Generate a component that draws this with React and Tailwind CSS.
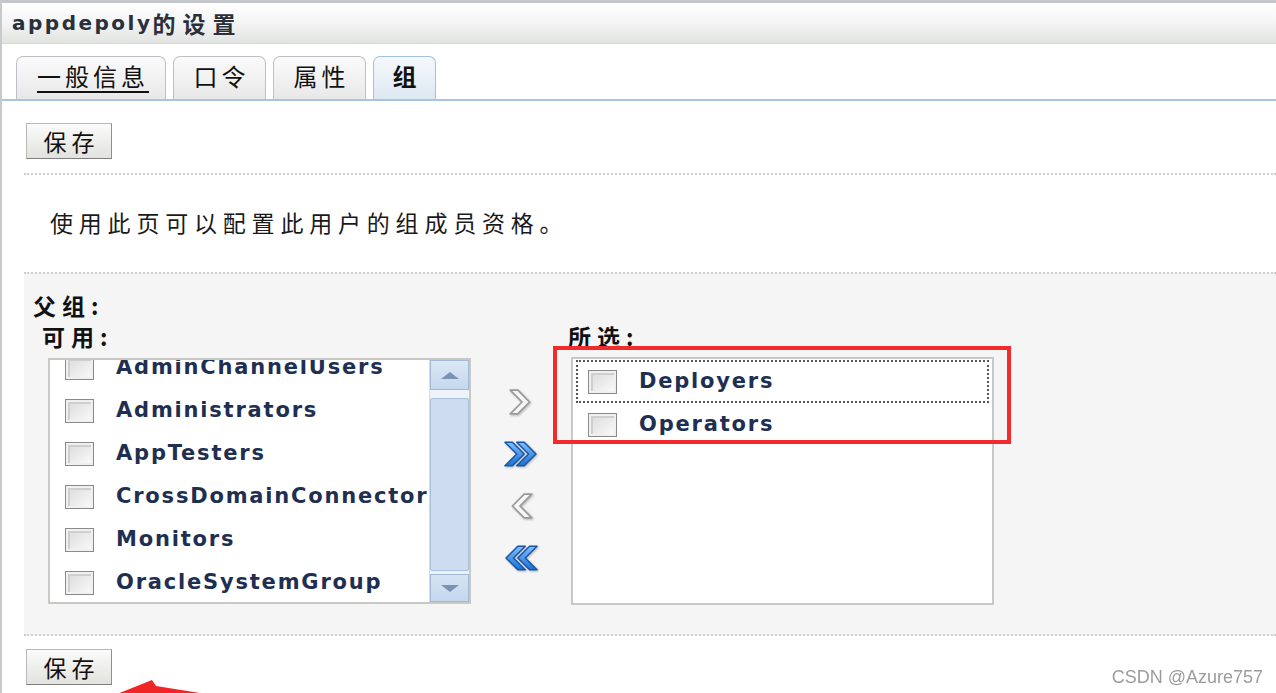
import React from "react";

const CJK = "font-['Noto_Sans_CJK_SC',sans-serif]";
const LAT = "font-['DejaVu_Sans','Noto_Sans_CJK_SC',sans-serif]";

function Checkbox() {
  return (
    <span className="inline-block w-[29px] h-[24px] shrink-0 border border-[#8a8a8a] bg-gradient-to-br from-[#d9d9d9] to-[#fbfbfb] shadow-[inset_0_0_0_2px_#f0f0f0,inset_1px_1px_0_3px_#cfcfcf]" />
  );
}

function SaveButton() {
  return (
    <button className={`w-[86px] h-[36px] border border-[#b8b8b8] border-r-[#8f8f8f] border-b-[#7f7f7f] bg-gradient-to-b from-[#fbfbfb] to-[#e2e2de] flex items-center justify-center text-[23px] tracking-[5px] pl-[5px] leading-none text-[#111] ${CJK}`}>
      保存
    </button>
  );
}

function Tab({ label, width, active, underline }) {
  return (
    <div
      className={`h-[43px] rounded-t-[7px] border border-b-0 flex items-center justify-center pb-[5px] ${CJK} text-[24px] tracking-[4px] pl-[4px] text-[#111] ${
        active
          ? "border-[#a4c0dd] bg-gradient-to-b from-[#f6f9fc] to-[#dde8f3] font-bold"
          : "border-[#bcc0c4] bg-gradient-to-b from-[#fbfbfb] to-[#e8e8e8]"
      }`}
      style={{ width }}
    >
      <span className={underline ? "underline underline-offset-[5px] decoration-[2px]" : ""}>{label}</span>
    </div>
  );
}

function Item({ name, focused }) {
  return (
    <div
      className={`h-[43px] flex items-center shrink-0 ${
        focused ? "border-2 border-dotted border-[#555] mx-[3px] pl-[10px] h-[41px]" : "pl-[15px]"
      }`}
    >
      <Checkbox />
      <span className={`ml-[22px] text-[21px] font-bold tracking-[1.8px] text-[#1e2f52] whitespace-nowrap ${LAT}`}>{name}</span>
    </div>
  );
}

function Chevron({ dir, double }) {
  const single = "3,3 10,3 21,14 10,25 3,25 14,14";
  const second = "14,3 21,3 32,14 21,25 14,25 25,14";
  const flip = dir === "left" ? "scale(-1,1) translate(-36,0)" : "";
  return (
    <svg width="40" height="30" viewBox="0 0 36 28" className="drop-shadow-[1px_1px_1px_rgba(0,0,0,0.25)]">
      <defs>
        <linearGradient id="bg1" x1="0" y1="0" x2="0" y2="1">
          <stop offset="0" stopColor="#7fc0ff" />
          <stop offset="1" stopColor="#1e6fd0" />
        </linearGradient>
      </defs>
      <g transform={flip}>
        {double ? (
          <>
            <polygon points={single} fill="url(#bg1)" stroke="#1757a8" strokeWidth="1.4" strokeLinejoin="round" />
            <polygon points={second} fill="url(#bg1)" stroke="#1757a8" strokeWidth="1.4" strokeLinejoin="round" />
          </>
        ) : (
          <polygon
            points="8,3 15,3 26,14 15,25 8,25 19,14"
            fill="#f6f6f6"
            stroke="#9a9a9a"
            strokeWidth="1.6"
            strokeLinejoin="round"
          />
        )}
      </g>
    </svg>
  );
}

export default function App() {
  const available = [
    "AdminChannelUsers",
    "Administrators",
    "AppTesters",
    "CrossDomainConnector",
    "Monitors",
    "OracleSystemGroup",
  ];
  return (
    <div className="relative w-[1276px] h-[693px] overflow-hidden bg-white border-l-2 border-[#c6cacd]">
      {/* top strip */}
      <div className="h-[3px] bg-[#c3c7cb]" />
      {/* title bar */}
      <div className="h-[41px] border-b border-[#d6d8d6] bg-gradient-to-b from-white via-[#f3f4f3] to-[#e2e4e1] flex items-center pl-[10px] text-[#2a2f3c]">
        <span className={`text-[20px] font-bold tracking-[2.5px] ${LAT}`}>appdepoly</span>
        <span className={`text-[23px] font-bold tracking-[7px] ${CJK}`}>的设置</span>
      </div>

      {/* tabs */}
      <div className="mt-[12px] flex items-end gap-[7px] pl-[14px] border-b-2 border-[#a9c4df]">
        <Tab label="一般信息" width={150} underline />
        <Tab label="口令" width={93} />
        <Tab label="属性" width={93} />
        <Tab label="组" width={63} active />
      </div>

      <div className="pl-[22px]">
        <div className="mt-[22px] pl-[2px]">
          <SaveButton />
        </div>
        <div className="mt-[14px] border-t-2 border-dotted border-[#cfcfcf]" />
        <div className={`h-[97px] flex items-center pl-[26px] pb-[2px] text-[23px] tracking-[5.8px] text-[#1a1a1a] ${CJK}`}>
          使用此页可以配置此用户的组成员资格。
        </div>

        {/* gray section */}
        <div className="border-t-2 border-b-2 border-dotted border-[#cfcfcf] bg-[#f5f5f5] h-[364px] pt-[16px]">
          <div className={`h-[30px] pl-[9px] text-[23px] font-bold tracking-[6px] leading-[30px] text-[#111] ${CJK}`}>父组:</div>
          <div className="flex mt-[2px]">
            {/* available column */}
            <div className="pl-[18px]">
              <div className={`h-[28px] leading-[28px] text-[23px] font-bold tracking-[6px] text-[#111] ${CJK}`}>可用:</div>
              <div className="mt-[8px] ml-[6px] w-[423px] h-[246px] border-2 border-[#c8c8c4] bg-white flex overflow-hidden">
                <div className="flex-1 overflow-hidden">
                  <div className="-mt-[14px] flex flex-col">
                    {available.map((n) => (
                      <Item key={n} name={n} />
                    ))}
                  </div>
                </div>
                {/* scrollbar */}
                <div className="w-[40px] flex flex-col bg-[#eef3f9] border-l border-[#d5dde8]">
                  <div className="h-[30px] border border-[#9fb9d6] bg-gradient-to-b from-[#dbe7f4] to-[#c6d8ee] flex items-center justify-center">
                    <span className="w-0 h-0 border-l-[9px] border-r-[9px] border-b-[7px] border-l-transparent border-r-transparent border-b-[#7a93b3]" />
                  </div>
                  <div className="h-[8px]" />
                  <div className="flex-1 border border-[#a9c0db] bg-[#cddcf0] rounded-[2px]" />
                  <div className="h-[3px]" />
                  <div className="h-[28px] border border-[#9fb9d6] bg-gradient-to-b from-[#d6e3f2] to-[#c6d8ee] flex items-center justify-center">
                    <span className="w-0 h-0 border-l-[9px] border-r-[9px] border-t-[7px] border-l-transparent border-r-transparent border-t-[#7a93b3]" />
                  </div>
                </div>
              </div>
            </div>

            {/* arrows */}
            <div className="w-[100px] flex flex-col items-center pt-[65px] gap-[22px]">
              <Chevron dir="right" />
              <Chevron dir="right" double />
              <Chevron dir="left" />
              <Chevron dir="left" double />
            </div>

            {/* selected column */}
            <div className="-ml-[3px]">
              <div className={`h-[28px] leading-[28px] text-[23px] font-bold tracking-[6px] text-[#111] ${CJK}`}>所选:</div>
              <div className="mt-[8px] pl-[3px]">
                <div className="w-[423px] h-[248px] -mt-[1px] border-2 border-[#c8c8c4] bg-white flex flex-col pt-[1px]">
                  <Item name="Deployers" focused />
                  <Item name="Operators" />
                </div>
              </div>
            </div>
          </div>
        </div>

        <div className="mt-[13px] pl-[2px]">
          <SaveButton />
        </div>
      </div>

      {/* red annotation box */}
      <div className="absolute left-[551px] top-[346px] w-[458px] h-[98px] border-[4px] border-[#f12b2b]" />

      {/* red annotation arrow */}
      <svg className="absolute left-[108px] top-[678px]" width="100" height="20" viewBox="0 0 100 20">
        <polygon points="2,18 42,2 46,8 90,15 92,20 2,20" fill="#f02626" />
      </svg>

      {/* watermark */}
      <div className="absolute right-[13px] top-[664px] text-[18px] text-[#9c9c9c] font-['Liberation_Sans',sans-serif] drop-shadow-[0_0_1px_rgba(255,255,255,0.9)]">
        CSDN @Azure757
      </div>
    </div>
  );
}
